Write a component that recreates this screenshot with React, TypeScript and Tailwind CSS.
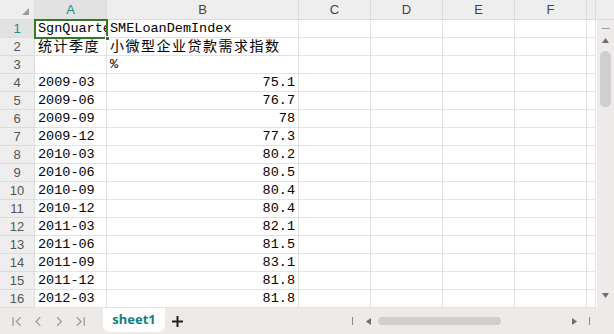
import React from "react";

const rows: [string, string][] = [
  ["SgnQuarter", "SMELoanDemIndex"],
  ["统计季度", "小微型企业贷款需求指数"],
  ["", "%"],
  ["2009-03", "75.1"],
  ["2009-06", "76.7"],
  ["2009-09", "78"],
  ["2009-12", "77.3"],
  ["2010-03", "80.2"],
  ["2010-06", "80.5"],
  ["2010-09", "80.4"],
  ["2010-12", "80.4"],
  ["2011-03", "82.1"],
  ["2011-06", "81.5"],
  ["2011-09", "83.1"],
  ["2011-12", "81.8"],
  ["2012-03", "81.8"],
];

const cellFont = { fontFamily: '"Liberation Mono", "Noto Sans CJK SC", monospace' };

const isCjk = (s: string) => /[\u4e00-\u9fff]/.test(s);

const Grey = "#a3a3a3";

function NavIcons() {
  return (
    <div className="flex items-center h-full">
      <svg width="110" height="26" viewBox="0 0 110 26" fill="none" stroke={Grey} strokeWidth="1.6">
        <line x1="14" y1="9" x2="14" y2="18" />
        <polyline points="22,9 17.5,13.5 22,18" />
        <polyline points="43,9 38.5,13.5 43,18" />
        <polyline points="61,9 65.5,13.5 61,18" />
        <polyline points="82,9 86.5,13.5 82,18" />
        <line x1="90" y1="9" x2="90" y2="18" />
      </svg>
    </div>
  );
}

export default function App() {
  const colW = [72, 192, 72, 72, 72, 72, 9];
  const letters = ["A", "B", "C", "D", "E", "F", ""];
  return (
    <div className="w-[614px] h-[334px] bg-white overflow-hidden flex flex-col relative" style={{ fontFamily: '"Liberation Sans", Arial, sans-serif' }}>
      {/* column header */}
      <div className="flex h-[20px] bg-[#eeeeee] border-b border-[#dcdcdc] shrink-0">
        <div className="w-[35px] border-r border-[#dcdcdc] relative">
          <svg className="absolute right-[5px] bottom-[4px]" width="7" height="7" viewBox="0 0 7 7">
            <polygon points="7,0 7,7 0,7" fill="#9a9a9a" />
          </svg>
        </div>
        {letters.map((l, i) => (
          <div
            key={i}
            className={`flex items-center justify-center text-[13px] border-r border-[#dcdcdc] ${i === 0 ? "bg-[#e2e2e2] text-[#1d8a86]" : "text-[#444]"}`}
            style={{ width: colW[i] }}
          >
            {l}
          </div>
        ))}
        <div className="flex-1" />
      </div>

      <div className="flex flex-1 min-h-0">
        {/* grid */}
        <div className="flex flex-col w-[597px] relative">
          {rows.map((r, ri) => (
            <div key={ri} className="flex h-[18px] shrink-0">
              <div
                className={`w-[35px] flex items-center justify-center text-[13px] border-r border-b border-[#dcdcdc] ${ri === 0 ? "bg-[#e2e2e2] text-[#1d8a86]" : "bg-[#eeeeee] text-[#555]"}`}
              >
                {ri + 1}
              </div>
              {colW.map((w, ci) => {
                const v = ci === 0 ? r[0] : ci === 1 ? r[1] : "";
                const numeric = ci === 1 && ri >= 3;
                return (
                  <div
                    key={ci}
                    className={`border-r border-b border-[#e3e3e3] flex items-center pt-[1px] text-black whitespace-nowrap ${ci === 0 ? "overflow-hidden" : "overflow-visible"} ${numeric ? "justify-end pr-[3px]" : "pl-[3px]"} ${isCjk(v) ? "text-[14px] tracking-[1.5px]" : "text-[13.5px]"}`}
                    style={{ ...cellFont, width: w, minWidth: w }}
                  >
                    {v}
                  </div>
                );
              })}
            </div>
          ))}
          {/* selection */}
          <div className="absolute z-10 left-[34px] top-[-1px] w-[74px] h-[20px] border-2 border-[#2f7a22]" />
          <div className="absolute z-10 left-[105px] top-[16px] w-[5px] h-[5px] bg-[#2f7a22] border border-white" />
        </div>
        {/* vertical scrollbar */}
        <div className="w-[17px] bg-[#eeebea] flex flex-col items-center relative">
          <div className="mt-[8px] w-[8px] h-[1px] bg-[#9c9c9c]" />
          <svg className="mt-[9px]" width="7" height="5" viewBox="0 0 7 5">
            <polygon points="3.5,0 7,5 0,5" fill="#6e6e6e" />
          </svg>
          <div className="mt-[8px] w-[11px] h-[56px] rounded-full bg-[#cfcfcf]" />
          <svg className="absolute bottom-[10px]" width="7" height="5" viewBox="0 0 7 5">
            <polygon points="0,0 7,0 3.5,5" fill="#6e6e6e" />
          </svg>
        </div>
      </div>

      {/* bottom tab bar */}
      <div className="h-[26px] bg-[#eeeae8] flex items-stretch shrink-0">
        <div className="w-[103px]">
          <NavIcons />
        </div>
        <div className="w-[62px] bg-white rounded-b-[7px] flex items-center justify-center text-[13px] font-bold text-[#12807d] mb-[2px]" style={{ fontFamily: '"Noto Sans", "Open Sans", sans-serif' }}>
          sheet1
        </div>
        <div className="w-[24px] flex items-center justify-center">
          <svg width="11" height="11" viewBox="0 0 11 11" stroke="#222" strokeWidth="2">
            <line x1="5.5" y1="0" x2="5.5" y2="11" />
            <line x1="0" y1="5.5" x2="11" y2="5.5" />
          </svg>
        </div>
        <div className="flex-1 flex items-center">
          <div className="ml-[163px] w-[1px] h-[8px] bg-[#8a8a8a]" />
          <svg className="ml-[13px]" width="5" height="7" viewBox="0 0 5 7">
            <polygon points="5,0 5,7 0,3.5" fill="#6e6e6e" />
          </svg>
          <div className="ml-[7px] w-[123px] h-[8px] rounded-full bg-[#cfcfcf]" />
          <svg className="ml-[71px]" width="5" height="7" viewBox="0 0 5 7">
            <polygon points="0,0 5,3.5 0,7" fill="#6e6e6e" />
          </svg>
          <div className="ml-[12px] w-[1px] h-[8px] bg-[#8a8a8a]" />
        </div>
      </div>
    </div>
  );
}
